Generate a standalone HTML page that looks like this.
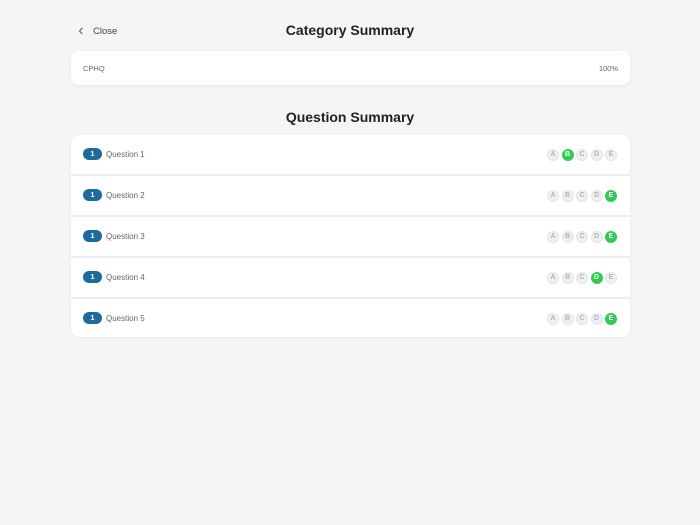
<!DOCTYPE html>
<html><head><meta charset="utf-8"><style>
*{margin:0;padding:0;box-sizing:border-box}
body{width:700px;height:525px;background:#f4f5f7;font-family:"Liberation Sans",sans-serif;position:relative;overflow:hidden;color:#333}
.close{position:absolute;left:78px;top:25px;font-size:9.5px;color:#444}
.close svg{position:absolute;left:0;top:2px}
.close span{position:absolute;left:15px;top:1px;white-space:nowrap}
h1{position:absolute;left:0;width:700px;text-align:center;font-size:14px;font-weight:bold;color:#222}
.card{position:absolute;left:71px;width:559px;background:#fff;border-radius:8px;box-shadow:0 1px 3px rgba(0,0,0,.06)}
.cat{top:51px;height:34px;font-size:7.5px;color:#666}
.cat .l{position:absolute;left:12px;top:13px}
.cat .r{position:absolute;right:12px;top:13px}
.q{top:135px;height:202px;background:#eceef1;overflow:hidden}
.row{position:absolute;left:0;width:559px;height:39px;background:#fff}
.badge{position:absolute;left:12px;top:13px;width:19px;height:12px;border-radius:6px;background:#1d6a9c;color:#fff;font-size:7.5px;font-weight:bold;text-align:center;line-height:12px}
.lbl{position:absolute;left:35px;top:15px;font-size:8px;color:#666}
.opts{position:absolute;left:476px;top:14px}
.o{position:absolute;top:0;width:12px;height:12px;border-radius:50%;background:#eef0f3;border:1px solid #e2e4e8;color:#b0b3b8;font-size:7px;font-weight:bold;text-align:center;line-height:10px}
.o.g{background:#2ecc55;border-color:#2ecc55;color:#fff}
</style></head><body>
<div class="close"><svg width="6" height="8" viewBox="0 0 6 8"><path d="M4.5 0.8L1.5 4L4.5 7.2" fill="none" stroke="#555" stroke-width="1"/></svg><span>Close</span></div>
<h1 style="top:22px">Category Summary</h1>
<div class="card cat"><span class="l">CPHQ</span><span class="r">100%</span></div>
<h1 style="top:109px">Question Summary</h1>
<div class="card q">
<div class="row" style="top:0"><div class="badge">1</div><div class="lbl">Question 1</div><div class="opts"><div class="o" style="left:0">A</div><div class="o g" style="left:14.5px">B</div><div class="o" style="left:29px">C</div><div class="o" style="left:43.5px">D</div><div class="o" style="left:58px">E</div></div></div>
<div class="row" style="top:41px"><div class="badge">1</div><div class="lbl">Question 2</div><div class="opts"><div class="o" style="left:0">A</div><div class="o" style="left:14.5px">B</div><div class="o" style="left:29px">C</div><div class="o" style="left:43.5px">D</div><div class="o g" style="left:58px">E</div></div></div>
<div class="row" style="top:82px"><div class="badge">1</div><div class="lbl">Question 3</div><div class="opts"><div class="o" style="left:0">A</div><div class="o" style="left:14.5px">B</div><div class="o" style="left:29px">C</div><div class="o" style="left:43.5px">D</div><div class="o g" style="left:58px">E</div></div></div>
<div class="row" style="top:123px"><div class="badge">1</div><div class="lbl">Question 4</div><div class="opts"><div class="o" style="left:0">A</div><div class="o" style="left:14.5px">B</div><div class="o" style="left:29px">C</div><div class="o g" style="left:43.5px">D</div><div class="o" style="left:58px">E</div></div></div>
<div class="row" style="top:164px"><div class="badge">1</div><div class="lbl">Question 5</div><div class="opts"><div class="o" style="left:0">A</div><div class="o" style="left:14.5px">B</div><div class="o" style="left:29px">C</div><div class="o" style="left:43.5px">D</div><div class="o g" style="left:58px">E</div></div></div>
</div>
</body></html>
